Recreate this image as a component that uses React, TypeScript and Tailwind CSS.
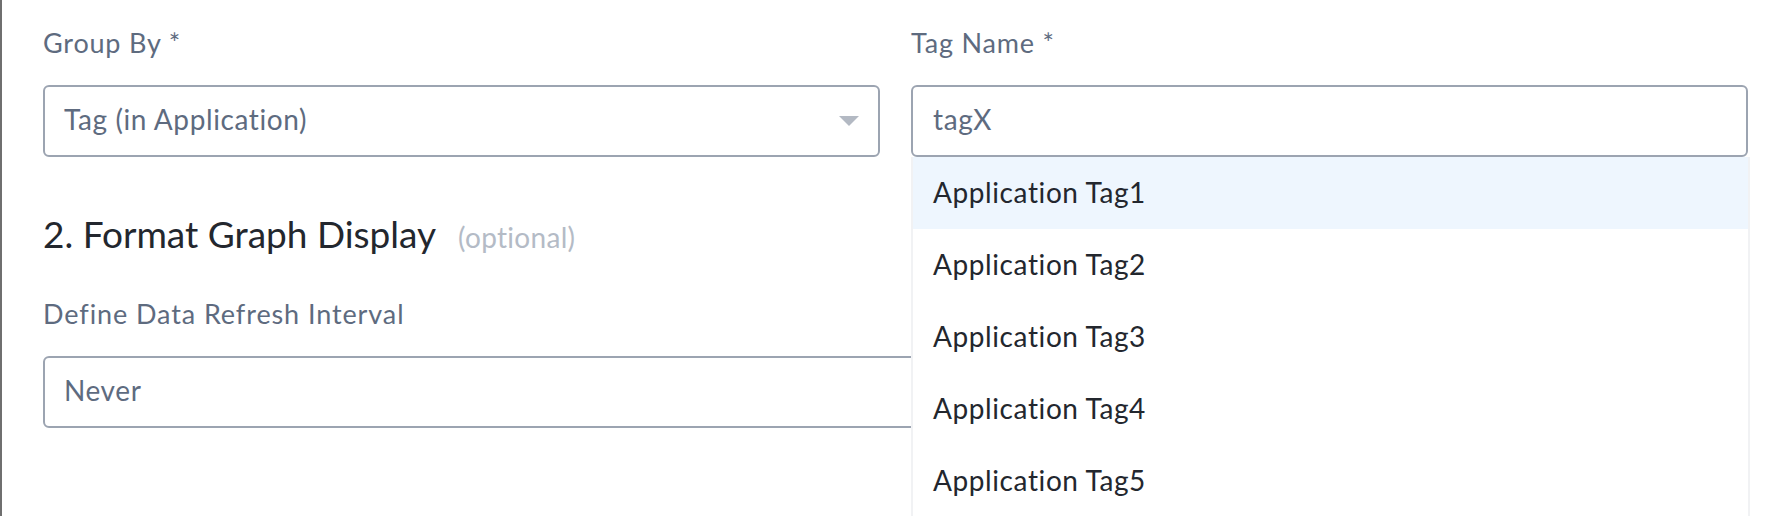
import { useState } from "react";

const TAGS = ["Application Tag1", "Application Tag2", "Application Tag3", "Application Tag4", "Application Tag5"];

function Caret() {
  return (
    <svg width="20" height="10" viewBox="0 0 20 10" className="shrink-0">
      <path d="M0 0 L20 0 L10 10 Z" fill="#b3b9c3" />
    </svg>
  );
}

export default function App() {
  const [active] = useState(0);

  return (
    <div className="w-[1779px] h-[516px] overflow-hidden bg-white border-l-2 border-[#6f6f6f] font-['Lato',sans-serif]">
      <div className="pl-[41px] pr-[31px] pt-[27px]">
        <div className="grid grid-cols-2 gap-x-[31px]">
          {/* Group by */}
          <div>
            <label className="block text-[27px] leading-[32px] tracking-[0.8px] text-[#5e6b7f]">Group By *</label>
            <div className="mt-[26px] h-[72px] rounded-[6px] border-2 border-[#9ca4b1] flex items-center justify-between pl-[19px] pr-[19px]">
              <span className="text-[28px] tracking-[0.6px] text-[#5e6b7f] pb-[4px]">Tag (in Application)</span>
              <Caret />
            </div>
          </div>

          {/* Tag name */}
          <div className="relative">
            <label className="block text-[27px] leading-[32px] tracking-[0.8px] text-[#5e6b7f]">Tag Name *</label>
            <div className="mt-[26px] h-[72px] rounded-[6px] border-2 border-[#9ca4b1] flex items-center pl-[20px]">
              <span className="text-[28px] tracking-[0.6px] text-[#5e6b7f] pb-[4px]">tagX</span>
            </div>
            <div className="absolute left-0 right-[-2px] top-full z-10 bg-white border-x-2 border-[#f1f2f4]">
              {TAGS.map((t, i) => (
                <div
                  key={t}
                  className={
                    "h-[72px] flex items-center pl-[20px] pb-[2px] text-[28px] tracking-[0.6px] text-[#23272e] " +
                    (i === active ? "bg-[#eef6fe]" : "bg-white")
                  }
                >
                  {t}
                </div>
              ))}
            </div>
          </div>
        </div>

        {/* Format graph display */}
        <div className="mt-[55px] flex items-baseline gap-[22px]">
          <h2 className="text-[37px] leading-[44px] text-[#23272e]">2. Format Graph Display</h2>
          <span className="text-[28px] tracking-[0.3px] text-[#b4bbc6]">(optional)</span>
        </div>

        <label className="block mt-[40px] text-[27px] leading-[32px] tracking-[0.9px] text-[#5e6b7f]">Define Data Refresh Interval</label>
        <div className="mt-[26px] h-[72px] rounded-[6px] border-2 border-[#9ca4b1] flex items-center pl-[19px]">
          <span className="text-[28px] tracking-[0.6px] text-[#5e6b7f] pb-[4px]">Never</span>
        </div>
      </div>
    </div>
  );
}
